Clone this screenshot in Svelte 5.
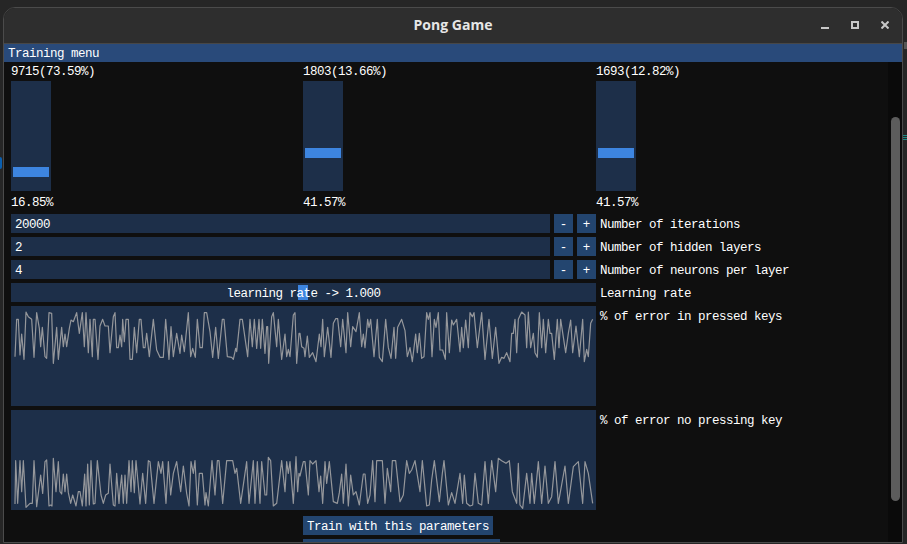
<script>
  const sliders = [
    { count: '9715(73.59%)', value: '16.85%', offset: 86 },
    { count: '1803(13.66%)', value: '41.57%', offset: 67 },
    { count: '1693(12.82%)', value: '41.57%', offset: 67 }
  ];
  const inputs = [
    { value: '20000', label: 'Number of iterations' },
    { value: '2', label: 'Number of hidden layers' },
    { value: '4', label: 'Number of neurons per layer' }
  ];
  const a1 = '45,170 50,58 55,58 60,165 65,102 72,178 78,36 85,50 95,58 102,172 110,38 118,85 122,140 127,82 135,170 140,175 147,38 155,40 160,190 170,82 175,178 185,82 190,140 195,102 200,140 208,85 213,60 220,65 230,38 238,100 247,38 253,140 258,38 265,158 270,58 277,170 280,58 285,58 294,178 300,78 308,58 315,78 325,78 330,158 340,50 345,38 350,143 355,143 360,105 365,140 368,58 373,125 378,58 385,58 390,178 397,178 403,82 410,158 418,58 423,58 430,143 435,143 440,100 448,170 460,58 470,150 480,172 490,172 497,58 507,178 513,80 520,170 530,100 540,160 545,105 553,155 565,38 572,170 578,145 586,172 592,58 600,143 607,143 613,38 620,38 630,95 638,172 647,82 655,175 667,58 672,58 682,170 695,172 700,178 707,145 710,155 720,58 727,58 743,170 750,58 757,140 763,58 770,145 777,58 782,145 787,58 795,160 800,80 803,80 806,190 815,50 820,38 830,140 835,58 845,178 855,102 860,170 865,148 870,170 880,45 885,38 890,190 897,100';
  const b1 = '0,100 5,140 12,145 15,170 22,108 28,172 38,158 48,185 58,102 63,140 68,58 73,170 83,82 93,172 100,70 107,56 113,56 122,140 128,58 138,158 143,38 152,140 158,80 168,95 178,38 185,140 190,102 195,143 203,58 207,82 212,58 222,170 232,58 238,172 247,185 257,58 265,143 273,175 282,82 287,175 293,82 305,58 315,92 322,170 330,143 337,185 347,102 352,158 358,100 365,175 372,170 380,38 385,58 390,38 396,170 403,58 408,82 415,38 420,150 428,150 436,178 440,38 448,158 455,60 460,75 470,58 480,155 485,82 490,143 497,60 505,143 510,38 517,50 522,38 532,143 545,38 555,178 567,58 577,175 587,82 597,190 605,172 612,175 620,158 630,185 635,100 640,100 645,58 650,158 655,58 665,36 675,45 680,143 685,36 692,143 700,100 705,158 712,172 718,38 725,143 730,58 737,158 745,58 750,100 755,100 763,178 772,58 777,143 782,58 797,158 805,100 812,60 818,158 828,78 838,170 848,58 853,185 860,148 865,170 872,70 878,58';
  const a2 = '45,192 47,62 53,190 60,62 65,155 70,62 78,202 90,190 97,190 102,62 110,200 122,105 128,160 135,65 140,60 147,198 152,195 156,198 160,55 168,155 175,65 180,155 185,162 190,102 195,155 200,102 205,158 212,190 218,165 228,198 235,155 240,155 247,198 254,102 258,198 263,72 268,195 273,62 280,192 285,190 292,62 303,165 310,190 317,165 325,160 330,72 340,195 345,198 350,100 357,190 360,150 365,105 370,190 375,105 380,190 387,62 393,155 397,62 403,158 408,62 420,192 428,100 437,190 445,62 450,65 462,190 475,65 483,100 488,65 498,190 505,65 512,165 520,100 530,65 542,155 550,78 560,160 567,198 573,65 580,100 585,62 592,195 598,100 607,100 615,195 618,158 625,198 636,62 645,165 652,62 657,62 668,190 680,62 698,62 705,100 710,85 722,190 740,65 747,190 760,62 765,190 772,65 780,190 785,65 795,165 800,165 805,52 812,62 820,198 830,190 845,62 855,155 860,65 865,100 870,65 880,190 888,50 893,155 897,100';
  const b2 = '0,108 10,65 15,65 25,165 30,62 38,72 48,62 57,155 62,108 68,190 75,65 80,130 88,65 100,185 112,190 118,158 125,102 130,190 138,72 145,198 152,105 160,165 168,155 178,195 190,102 195,102 203,190 210,165 218,62 225,185 230,62 240,62 247,62 255,190 262,85 272,155 277,62 287,62 300,185 310,165 320,62 328,100 335,90 345,62 360,155 367,62 380,198 388,195 395,120 403,62 418,185 427,100 432,62 445,195 455,158 465,190 475,130 480,100 488,190 493,105 500,190 510,198 518,195 525,100 535,190 545,195 555,65 565,190 575,62 587,155 595,55 605,62 618,70 628,62 637,155 650,190 655,70 660,195 668,205 680,100 690,190 695,100 703,190 715,65 725,190 735,78 745,190 755,170 765,65 775,190 795,78 805,190 820,80 835,65 848,190 855,65 865,100 878,190';

  // Samples are measured at 3x: x from the left of the screen, y from the box's top.
  function toPoints(first, second, dy) {
    const shift = (list, dx) =>
      list.split(' ').map((p) => {
        const [x, y] = p.split(',').map(Number);
        return `${(x + dx - 33) / 3},${(y + dy) / 3}`;
      });
    return [...shift(first, 0), ...shift(second, 900)].join(' ');
  }
  const plots = [
    { points: toPoints(a1, b1, -18), label: '% of error in pressed keys' },
    { points: toPoints(a2, b2, 90), label: '% of error no pressing key' }
  ];
</script>

<div class="screen">
  <span class="edge-blue"></span>
  <span class="edge-teal"></span>
  <span class="edge-gray"></span>
  <div class="window">
    <header class="titlebar">
      <span class="title">Pong Game</span>
      <div class="controls">
        <svg width="8" height="8" viewBox="0 0 8 8"><rect x="0" y="6" width="8" height="2" fill="#c8c8c8" /></svg>
        <svg width="8" height="8" viewBox="0 0 8 8"><rect x="1" y="1" width="6" height="6" fill="none" stroke="#c8c8c8" stroke-width="2" /></svg>
        <svg width="8" height="8" viewBox="0 0 8 8"><path d="M0.5 0.5 L7.5 7.5 M7.5 0.5 L0.5 7.5" stroke="#c8c8c8" stroke-width="2" fill="none" /></svg>
      </div>
    </header>
    <div class="menu">Training menu</div>
    <div class="body">
      <main class="main">
        <section class="sliders">
          {#each sliders as s}
            <div class="vcol">
              <div class="line">{s.count}</div>
              <div class="vslider"><div class="vgrab" style="margin-top: {s.offset}px"></div></div>
              <div class="line vvalue">{s.value}</div>
            </div>
          {/each}
        </section>
        {#each inputs as row}
          <div class="row">
            <div class="field">{row.value}</div>
            <button class="step">-</button>
            <button class="step">+</button>
            <span class="label">{row.label}</span>
          </div>
        {/each}
        <div class="row">
          <div class="hslider">
            <span class="hgrab"></span>
            <span class="htext">learning rate -&gt; 1.000</span>
          </div>
          <span class="label">Learning rate</span>
        </div>
        {#each plots as plot}
          <div class="row plotrow">
            <svg class="plot" width="585" height="100" viewBox="0 0 585 100">
              <polyline points={plot.points} />
            </svg>
            <span class="label">{plot.label}</span>
          </div>
        {/each}
        <div class="actions">
          <button class="action first">Train with this parameters</button>
          <button class="action second"></button>
        </div>
      </main>
      <div class="track"><div class="thumb"></div></div>
    </div>
  </div>
</div>

<style>
  :global(body) {
    margin: 0;
    background: #262626;
  }
  .screen {
    position: relative;
    width: 907px;
    height: 544px;
    overflow: hidden;
    padding: 7px 4px 0 3px;
    box-sizing: border-box;
    background: #262626;
  }
  .edge-blue {
    position: absolute;
    left: 0;
    top: 157px;
    width: 2px;
    height: 12px;
    border-radius: 0 4px 4px 0;
    background: #0a5fb0;
  }
  .edge-teal {
    position: absolute;
    right: 0;
    top: 135px;
    width: 4px;
    height: 5px;
    background: repeating-linear-gradient(#1f8a84 0 1px, #262626 1px 2px);
  }
  .edge-gray {
    position: absolute;
    right: 0;
    top: 42px;
    width: 3px;
    height: 7px;
    background: #555;
  }
  .window {
    height: 536px;
    display: flex;
    flex-direction: column;
    box-sizing: border-box;
    border: 1px solid #4b4b4b;
    border-radius: 12px 12px 0 0;
    overflow: hidden;
    background: #0f0f0f;
    font-family: "Liberation Mono", "DejaVu Sans Mono", monospace;
    font-size: 12.5px;
    letter-spacing: -0.5px;
    color: #fff;
  }
  .titlebar {
    position: relative;
    flex: none;
    height: 36px;
    box-sizing: border-box;
    display: flex;
    align-items: center;
    justify-content: center;
    padding-bottom: 2px;
    background: #2e2e2e;
    border-bottom: 1px solid #474747;
    letter-spacing: normal;
  }
  .title {
    font-family: "Open Sans", sans-serif;
    font-weight: 700;
    font-size: 14px;
    color: #e6e6e6;
  }
  .controls {
    position: absolute;
    right: 13px;
    top: 13px;
    display: flex;
    gap: 22px;
  }
  .menu {
    flex: none;
    height: 18px;
    line-height: 20px;
    padding-left: 4px;
    background: #294a7a;
  }
  .body {
    flex: 1;
    min-height: 0;
    display: flex;
  }
  .main {
    flex: 1;
    min-width: 0;
    padding: 1px 0 0 7px;
    overflow: hidden;
  }
  .sliders {
    display: grid;
    grid-template-columns: 292px 293px 1fr;
  }
  .line {
    height: 18px;
    line-height: 19px;
  }
  .vslider {
    width: 40px;
    height: 110px;
    padding: 0 2px;
    box-sizing: border-box;
    overflow: hidden;
    background: #1d2f49;
  }
  .vgrab {
    height: 10px;
    background: #3d85e0;
  }
  .vvalue {
    margin-top: 5px;
    height: 18px;
    line-height: 15px;
  }
  .row {
    display: flex;
    height: 19px;
    margin-bottom: 4px;
  }
  .field {
    width: 539px;
    flex: none;
    padding-left: 4px;
    box-sizing: border-box;
    line-height: 23px;
    background: #1d2f49;
  }
  .step {
    flex: none;
    width: 19px;
    height: 19px;
    margin: 0 0 0 4px;
    padding: 3px 0 0;
    border: 0;
    background: #23456f;
    color: #fff;
    font: inherit;
    letter-spacing: 0;
    line-height: 16px;
  }
  .label {
    margin-left: 4px;
    line-height: 23px;
    white-space: nowrap;
  }
  .hslider {
    position: relative;
    flex: none;
    width: 585px;
    height: 19px;
    background: #1d2f49;
    text-align: center;
    line-height: 23px;
  }
  .hgrab {
    position: absolute;
    left: 287px;
    top: 2px;
    width: 10px;
    height: 15px;
    background: #3d85e0;
  }
  .htext {
    position: relative;
  }
  .plotrow {
    height: 100px;
  }
  .plot {
    display: block;
    flex: none;
    background: #1d2f49;
  }
  .plot polyline {
    fill: none;
    stroke: #95979b;
    stroke-width: 1.2;
    stroke-linejoin: round;
  }
  .actions {
    margin: 6px 0 0 292px;
    display: flex;
    flex-direction: column;
    align-items: flex-start;
    gap: 4px;
  }
  .action {
    height: 19px;
    margin: 0;
    padding: 3px 0 0;
    border: 0;
    background: #23456f;
    color: #fff;
    font: inherit;
    letter-spacing: -0.5px;
    line-height: 16px;
    white-space: nowrap;
    flex: none;
  }
  .first {
    width: 190px;
  }
  .second {
    width: 197px;
  }
  .track {
    flex: none;
    width: 14px;
    padding-top: 55px;
    box-sizing: border-box;
    background: #0a0a0a;
  }
  .thumb {
    width: 9px;
    height: 384px;
    margin-left: 3px;
    border-radius: 5px;
    background: #5c5c5c;
  }
</style>
